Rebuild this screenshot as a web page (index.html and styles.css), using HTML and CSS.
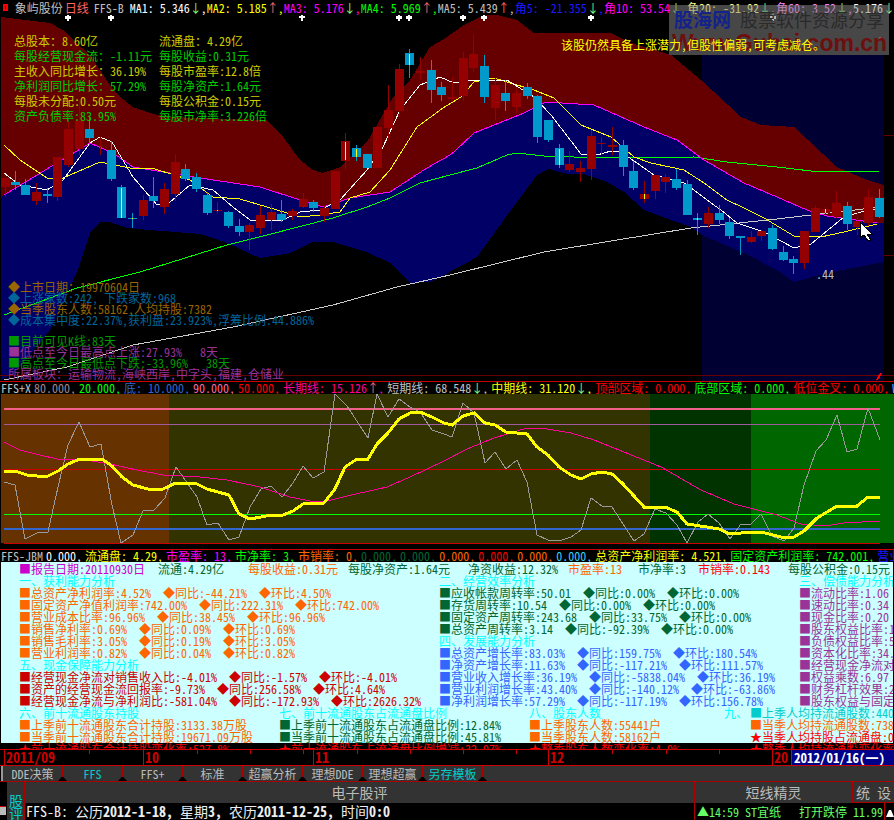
FILE: index.html
```html
<!DOCTYPE html>
<html lang="zh">
<head>
<meta charset="utf-8">
<title>象屿股份 日线</title>
<link rel="stylesheet" href="styles.css">
</head>
<body>
<div class="app">
  <div class="wm">
    <div class="wm-top"><span class="wm-logo">股海网</span><span class="wm-sub">股票软件资源分享</span></div>
    <div class="wm-url">Www.Guhai.com.cn</div>
  </div>

  <header class="head">
    <span class="h-sq"></span>
    <span class="h-name c-s">象屿股份</span>
    <span class="h-per c-sal">日线</span>
    <span class="h-idx c-s">FFS-B</span>
    <span class="c-w">MA1: 5.346<u class="dn">↓</u>,</span>
    <span class="c-y">MA2: 5.185<u class="up">↑</u>,</span>
    <span class="c-m">MA3: 5.176<u class="dn">↓</u>,</span>
    <span class="c-g">MA4: 5.969<u class="up">↑</u>,</span>
    <span class="c-s">MA5: 5.439<u class="up">↑</u>,</span>
    <span class="c-b">角5: -21.355<u class="dn">↓</u>,</span>
    <span class="c-m">角10: 53.54<u class="dn">↓</u>,</span>
    <span class="c-ly">角20: -31.92<u class="dn">↓</u>,</span>
    <span class="c-lm">角60: 3.52<u class="dn">↓</u>,</span>
    <span class="c-w">5.176<u class="dn">↓</u></span>
  </header>

  <section class="chart">
    <svg class="plot" width="894" height="366" viewBox="0 15 894 366">
      <rect x="702" y="55" width="182" height="326" fill="#000033"/>
      <polygon fill="#660000" points="1,17 50,23 63,30 73,40 90,55 100,70 110,85 120,97 133,107 150,113 167,117 267,120 283,137 300,160 313,170 323,173 340,167 367,142 393,97 410,80 430,47 444,39 464,25 484,15 497,15 517,20 534,33 611,33 631,43 671,55 701,80 741,117 761,125 794,127 837,167 867,180 884,185 884,223 877,223 827,216 807,210 777,197 744,183 704,160 677,140 644,127 594,105 546,102 524,113 474,133 454,152 450,155 427,168 390,192 350,198 323,207 300,200 260,187 200,178 133,167 113,153 90,143 4,195 1,197"/>
      <polygon fill="#000066" points="1,197 4,195 90,143 113,153 133,167 200,178 260,187 300,200 323,207 350,198 390,192 427,168 450,155 454,152 474,133 524,113 546,102 594,105 644,127 677,140 704,160 744,183 777,197 807,210 827,216 877,223 884,223 884,262 827,273 794,282 777,270 744,253 702,235 691,227 671,220 644,210 624,192 607,182 584,174 567,174 549,169 537,175 511,210 477,257 444,275 430,282 410,283 390,263 367,252 333,242 313,242 290,253 260,258 227,243 200,234 150,230 127,228 110,222 100,222 90,233 78,270 50,330 20,367 1,381"/>
      <path class="ln" stroke="#660000" d="M0 375.5H884M884 14.5H894M884 135.5H894M884 255.5H894M884 375.5H894"/>
      <polyline class="ln" stroke="#cccccc" points="4,380 67,367 133,345 233,327 333,305 397,287 450,275 544,252 611,241 691,228 777,219 811,215 881,207"/>
      <polyline class="ln" stroke="#00ff00" points="4,315 77,288 140,272 227,245 267,235 333,218 367,207 390,198 420,183 450,175 477,168 507,155 517,153 544,156 604,158 694,157 727,162 777,167 811,171 851,171 879,171"/>
      <polyline class="ln" stroke="#ff00ff" points="4,195 90,143 113,153 133,167 200,178 260,187 300,200 323,207 350,198 390,192 427,168 450,155 454,152 474,133 524,113 546,102 594,105 644,127 677,140 704,160 744,183 777,197 807,210 827,216 877,223"/>
      <polyline class="ln" stroke="#ffff00" points="4,145 20,160 47,178 63,178 100,162 130,168 155,169 190,180 213,197 240,199 277,210 300,217 320,215 340,212 350,198 370,192 390,170 417,127 443,108 461,97 474,82 494,78 507,82 534,90 554,98 581,125 611,137 634,157 651,163 684,170 704,183 727,200 744,208 764,218 794,236 821,237 844,232 877,224"/>
      <polyline class="ln" stroke="#ffffff" points="4,173 20,185 47,190 63,180 90,143 100,137 112,142 133,177 157,205 170,202 190,185 213,190 233,207 250,220 283,220 300,212 320,210 340,200 367,170 383,147 400,110 420,85 440,77 454,83 474,80 507,80 534,97 551,115 581,154 597,155 611,151 621,152 637,163 654,175 684,183 694,190 711,203 721,210 737,223 764,232 794,248 811,244 844,217 861,212 881,208"/>
      <path fill="#950000" d="M1 178h9v9h-9zM5 178h1v19h-1zM32 192h9v9h-9zM36 183h1v22h-1zM53 157h9v40h-9zM57 157h1v44h-1zM64 129h9v36h-9zM68 120h1v47h-1zM75 121h9v28h-9zM79 100h1v55h-1zM100 137h1v18h-1zM139 200h9v16h-9zM143 195h1v25h-1zM160 189h9v18h-9zM164 183h1v31h-1zM171 162h9v32h-9zM175 154h1v47h-1zM213 210h9v1h-9zM217 202h1v11h-1zM245 225h9v7h-9zM249 223h1v27h-1zM256 215h9v13h-9zM260 206h1v28h-1zM267 212h9v8h-9zM271 204h1v26h-1zM288 211h9v5h-9zM292 209h1v11h-1zM299 199h9v8h-9zM303 193h1v15h-1zM320 208h9v8h-9zM324 206h1v16h-1zM331 171h9v38h-9zM341 141h9v20h-9zM345 133h1v37h-1zM373 127h9v41h-9zM384 110h9v18h-9zM388 85h1v55h-1zM395 69h9v42h-9zM399 64h1v53h-1zM416 71h9v2h-9zM420 57h1v23h-1zM448 97h9v2h-9zM452 77h1v25h-1zM459 58h9v38h-9zM463 52h1v49h-1zM469 54h9v14h-9zM473 34h1v38h-1zM491 85h9v23h-9zM495 78h1v42h-1zM512 93h9v14h-9zM516 88h1v25h-1zM565 164h9v6h-9zM569 151h1v21h-1zM576 168h9v4h-9zM580 161h1v21h-1zM587 136h9v33h-9zM591 130h1v50h-1zM597 143h9v1h-9zM601 137h1v18h-1zM608 145h9v2h-9zM612 127h1v28h-1zM640 194h9v5h-9zM644 181h1v22h-1zM651 175h9v16h-9zM655 175h1v24h-1zM661 177h9v5h-9zM665 174h1v19h-1zM704 213h9v11h-9zM708 207h1v21h-1zM747 237h9v5h-9zM751 231h1v12h-1zM757 231h9v5h-9zM761 230h1v11h-1zM800 231h9v32h-9zM804 231h1v38h-1zM811 208h9v24h-9zM815 205h1v27h-1zM821 209h9v4h-9zM825 207h1v8h-1zM832 203h9v13h-9zM836 191h1v27h-1zM853 221h9v6h-9zM857 210h1v25h-1zM864 197h9v26h-9zM868 189h1v37h-1z"/>
      <path fill="#0099cc" d="M11 182h9v3h-9zM15 171h1v19h-1zM21 185h9v10h-9zM25 179h1v16h-1zM43 194h9v2h-9zM47 188h1v15h-1zM85 129h9v9h-9zM89 117h1v28h-1zM107 150h9v29h-9zM111 141h1v40h-1zM117 187h9v31h-9zM121 185h1v33h-1zM128 218h9v1h-9zM132 213h1v15h-1zM149 196h9v5h-9zM153 177h1v31h-1zM181 169h9v10h-9zM185 164h1v17h-1zM192 177h9v12h-9zM196 173h1v19h-1zM203 195h9v18h-9zM207 192h1v23h-1zM224 212h9v14h-9zM228 211h1v17h-1zM235 226h9v6h-9zM239 219h1v17h-1zM277 214h9v6h-9zM281 200h1v22h-1zM309 202h9v6h-9zM313 200h1v12h-1zM352 148h9v9h-9zM356 145h1v16h-1zM363 154h9v14h-9zM405 53h9v12h-9zM409 49h1v29h-1zM427 70h9v20h-9zM431 60h1v43h-1zM437 87h9v8h-9zM441 82h1v19h-1zM480 66h9v31h-9zM484 55h1v48h-1zM501 93h9v8h-9zM505 80h1v31h-1zM523 87h9v9h-9zM527 83h1v16h-1zM533 96h9v41h-9zM537 95h1v48h-1zM544 120h9v20h-9zM548 120h1v22h-1zM555 148h9v17h-9zM559 144h1v24h-1zM619 145h9v22h-9zM623 140h1v36h-1zM629 171h9v17h-9zM633 161h1v29h-1zM672 179h9v9h-9zM676 169h1v21h-1zM683 184h9v31h-9zM687 180h1v35h-1zM693 218h9v2h-9zM697 213h1v22h-1zM715 213h9v7h-9zM719 205h1v19h-1zM725 222h9v14h-9zM729 218h1v21h-1zM736 236h9v2h-9zM740 236h1v19h-1zM768 228h9v21h-9zM772 225h1v25h-1zM779 252h9v8h-9zM783 246h1v15h-1zM789 259h9v4h-9zM793 256h1v18h-1zM843 206h9v18h-9zM847 202h1v28h-1zM875 198h9v19h-9zM879 189h1v29h-1z"/>
      <path fill="#ffff00" d="M121 188h1v30h-1zM132 218h1v1h-1zM217 210h1v1h-1zM345 142h1v18h-1zM356 149h1v8h-1zM409 54h1v11h-1zM559 149h1v16h-1zM644 194h1v5h-1zM697 218h1v2h-1zM825 209h1v4h-1z"/>
      <path fill="#ffffff" d="M65 16h6v3h-6zM67 14h2v7h-2zM108 16h6v3h-6zM110 14h2v7h-2zM299 16h6v2h-6zM301 14h2v7h-2zM396 16h6v3h-6zM398 14h2v7h-2zM406 16h6v3h-6zM408 14h2v7h-2zM460 16h6v3h-6zM462 14h2v7h-2zM481 16h6v3h-6zM483 14h2v7h-2zM588 16h6v3h-6zM590 14h2v7h-2zM770 16h6v3h-6zM772 14h2v7h-2z"/>
      <path fill="#ffffff" stroke="#000000" d="M860 222v16l4-3 4 6 3-1-4-6h5z"/>
      <path class="thick" stroke="#ff0000" d="M877 380L881 373"/>
      <path fill="#ff0000" d="M879 37h2v2h-2z"/>
    </svg>

    <div class="info">
      <div class="c-gold">总股本：8.60亿</div><div class="c-gold">流通盘：4.29亿</div>
      <div class="c-gr">每股经营现金流：-1.11元</div><div class="c-gr">每股收益:0.31元</div>
      <div class="c-gold">主收入同比增长：36.19%</div><div class="c-gold">每股市盈率:12.8倍</div>
      <div class="c-gr">净利润同比增长：57.29%</div><div class="c-gr">每股净资产:1.64元</div>
      <div class="c-gold">每股未分配:0.50元</div><div class="c-gold">每股公积金:0.15元</div>
      <div class="c-gr">资产负债率:83.95%</div><div class="c-gr">每股市净率:3.226倍</div>
    </div>

    <div class="note">该股仍然具备上涨潜力，但股性偏弱，可考虑减仓。</div>
    <div class="num44">.44</div>

    <div class="facts">
      <div class="c-bro">◆上市日期：19970604日</div>
      <div class="c-teal">◆上涨家数:242, 下跌家数:968</div>
      <div class="c-bro">◆当季股东人数:58162,人均持股:7382</div>
      <div class="c-teal">◆成本集中度:22.37%,获利盘:23.923%,浮筹比例:44.886%</div>
      <div class="c-gr2 gap">■目前可见K线:83天</div>
      <div class="c-pur">■低点至今日最高点上涨:27.93%   8天</div>
      <div class="c-gr2">■高点至今日最低点下跌:-33.96%   38天</div>
      <div class="c-pur">所属板块：运输物流,海峡西岸,中字头,福建,仓储业</div>
    </div>
  </section>

  <div class="bar">
    <span class="c-s">FFS+X</span>
    <span class="c-gp">80.000,</span>
    <span class="c-g">20.000,</span>
    <span class="c-bl">底: 10.000,</span>
    <span class="c-pk">90.000,</span>
    <span class="c-r">50.000,</span>
    <span class="c-hp">长期线: 15.126<u class="up">↑</u>,</span>
    <span class="c-s">短期线: 68.548<u class="dn">↓</u>,</span>
    <span class="c-y">中期线: 31.120<u class="dn">↓</u>,</span>
    <span class="c-r">顶部区域: 0.000,</span>
    <span class="c-g">底部区域: 0.000,</span>
    <span class="c-r">低位金叉: 0.000,</span>
    <span class="c-c">W,</span>
  </div>

  <svg class="sub" width="894" height="155" viewBox="0 394 894 155">
    <rect x="1" y="394" width="168" height="149" fill="#663300"/>
    <rect x="169" y="394" width="481" height="149" fill="#333300"/>
    <rect x="650" y="394" width="101" height="149" fill="#003300"/>
    <rect x="751" y="394" width="143" height="149" fill="#006600"/>
    <path class="ln" stroke="#a05aa0" d="M4 424.5H880"/>
    <path class="ln" stroke="#cc0000" d="M4 469.5H880M4 543.5H880"/>
    <path class="ln" stroke="#00ff00" d="M4 514.5H880"/>
    <path class="thick" stroke="#f06088" d="M4 409H880"/>
    <path class="thick" stroke="#3366cc" d="M4 529H880"/>
    <polyline class="ln" stroke="#999999" points="4,482 15,485 25,539 37,533 48,532 58,487 68,445 79,422 90,447 101,444 112,505 121,543 133,535 143,511 154,510 165,498 176,467 197,497 207,525 218,523 229,540 239,537 250,507 261,489 271,486 282,497 293,483 303,466 313,478 324,472 335,394 347,406 368,438 377,394 388,417 399,399 410,407 420,412 432,430 444,434 452,437 463,403 474,413 485,463 495,452 506,469 517,460 527,482 537,535 548,540 559,541 571,537 581,530 591,498 602,506 612,507 634,541 644,534 655,509 666,513 677,525 687,543 698,522 708,514 719,523 730,539 741,524 751,524 761,514 772,536 784,541 794,528 804,485 816,451 826,440 837,415 847,452 857,449 868,408 880,440"/>
    <polyline class="ln" stroke="#ff0099" points="4,442 20,450 40,455 57,459 80,459 110,464 137,470 163,475 200,477 227,480 260,487 290,497 310,501 327,501 347,496 387,487 410,477 444,461 467,449 494,438 527,428 541,428 571,433 594,440 624,452 661,467 701,490 734,504 777,515 801,524 824,526 844,523 880,521"/>
    <polyline class="thick3" stroke="#ffff00" points="4,471 15,471 27,475 37,476 48,476 58,471 68,464 80,459 102,459 112,466 122,477 133,485 148,489 163,489 176,483 197,484 207,489 229,495 239,514 250,519 261,517 271,515 283,515 293,511 303,504 324,503 335,489 345,467 357,459 368,459 377,444 388,433 399,419 410,413 420,412 432,417 444,423 452,425 463,416 474,413 485,423 495,425 506,432 527,434 537,447 548,455 559,467 571,475 581,479 591,474 602,472 612,474 622,483 634,496 644,507 665,507 677,512 687,524 707,527 719,529 730,534 741,533 761,532 781,537 794,537 804,531 817,518 837,506 857,506 868,497 880,497"/>
  </svg>

  <div class="bar">
    <span class="c-s">FFS-JBM</span>
    <span class="c-w">0.000,</span>
    <span class="c-y">流通盘: 4.29,</span>
    <span class="c-m">市盈率: 13,</span>
    <span class="c-g">市净率: 3,</span>
    <span class="c-o">市销率: 0,</span>
    <span class="c-dg">0.000,</span>
    <span class="c-dg">0.000,</span>
    <span class="c-o">0.000,</span>
    <span class="c-r">0.000,</span>
    <span class="c-o">0.000,</span>
    <span class="c-c">0.000,</span>
    <span class="c-y">总资产净利润率: 4.521,</span>
    <span class="c-g">固定资产利润率: 742.001,</span>
    <span class="c-b">营业</span>
  </div>

  <section class="f10">
    <div class="f-top">
      <div class="t-pur2">■报告日期:20110930日</div>
      <div class="t-dg">流通:4.29亿</div>
      <div class="t-o">每股收益:0.31元</div>
      <div class="t-dg">每股净资产:1.64元</div>
      <div class="t-dg">净资收益:12.32%</div>
      <div class="t-o">市盈率:13</div>
      <div class="t-dg">市净率:3</div>
      <div class="t-r">市销率:0.143</div>
      <div class="t-dg">每股公积金:0.15元</div>
    </div>
    <div class="f-cols">
      <div>
        <h3>一、获利能力分析</h3>
        <div class="t-o">■总资产净利润率:4.52%  ◆同比:-44.21%  ◆环比:4.50%</div>
        <div class="t-o">■固定资产净值利润率:742.00%  ◆同比:222.31%  ◆环比:742.00%</div>
        <div class="t-o">■营业成本比率:96.96%  ◆同比:38.45%  ◆环比:96.96%</div>
        <div class="t-o">■销售净利率:0.69%  ◆同比:0.09%  ◆环比:0.69%</div>
        <div class="t-o">■销售毛利率:3.05%  ◆同比:0.19%  ◆环比:3.05%</div>
        <div class="t-o">■营业利润率:0.82%  ◆同比:0.04%  ◆环比:0.82%</div>
        <h3>五、现金保障能力分析</h3>
        <div class="t-dr">■经营现金净流对销售收入比:-4.01%  ◆同比:-1.57%  ◆环比:-4.01%</div>
        <div class="t-dr">■资产的经营现金流回报率:-9.73%  ◆同比:256.58%  ◆环比:4.64%</div>
        <div class="t-dr">■经营现金净流与净利润比:-581.04%  ◆同比:-172.93%  ◆环比:2626.32%</div>
      </div>
      <div>
        <h3>二、经营效率分析</h3>
        <div class="t-dg">■应收帐款周转率:50.01  ◆同比:0.00%  ◆环比:0.00%</div>
        <div class="t-dg">■存货周转率:10.54  ◆同比:0.00%  ◆环比:0.00%</div>
        <div class="t-dg">■固定资产周转率:243.68  ◆同比:33.75%  ◆环比:0.00%</div>
        <div class="t-dg">■总资产周转率:3.14  ◆同比:-92.39%  ◆环比:0.00%</div>
        <h3>四、发展能力分析</h3>
        <div class="t-bl">■总资产增长率:83.03%  ◆同比:159.75%  ◆环比:180.54%</div>
        <div class="t-bl">■净资产增长率:11.63%  ◆同比:-117.21%  ◆环比:111.57%</div>
        <div class="t-bl">■营业收入增长率:36.19%  ◆同比:-5838.04%  ◆环比:36.19%</div>
        <div class="t-bl">■营业利润增长率:43.40%  ◆同比:-140.12%  ◆环比:-63.86%</div>
        <div class="t-bl">■净利润增长率:57.29%  ◆同比:-117.19%  ◆环比:156.78%</div>
      </div>
      <div>
        <h3>三、偿债能力分析</h3>
        <div class="t-pu">■流动比率:1.06</div>
        <div class="t-pu">■速动比率:0.34</div>
        <div class="t-pu">■现金比率:0.20</div>
        <div class="t-pu">■股东权益比率:11.42%</div>
        <div class="t-pu">■负债权益比率:5.19</div>
        <div class="t-pu">■资本化比率:34.62%</div>
        <div class="t-pu">■经营现金净流对负债比</div>
        <div class="t-pu">■权益乘数:6.97</div>
        <div class="t-pu">■财务杠杆效果:2.12</div>
        <div class="t-pu">■股东权益与固定资产比</div>
      </div>
    </div>
    <div class="f-low">
      <div>
        <h3>六、前十流通股东持股</h3>
        <div class="t-o">■上季前十流通股东合计持股:3133.38万股</div>
        <div class="t-o">■当季前十流通股东合计持股:19671.09万股</div>
        <div class="t-r">★前十流通股东合计持股变化率:527.8%</div>
      </div>
      <div>
        <h3>七、前十流通股东占流通盘比例</h3>
        <div class="t-dg">■上季前十流通股东占流通盘比例:12.84%</div>
        <div class="t-dg">■当季前十流通股东占流通盘比例:45.81%</div>
        <div class="t-r">★前十流通股东占流通盘比例增减:32.97%</div>
      </div>
      <div>
        <h3>八、股东人数</h3>
        <div class="t-o">■上季股东人数:55441户</div>
        <div class="t-o">■当季股东人数:58162户</div>
        <div class="t-r">★整季股东人数变化率:4.9%</div>
      </div>
      <div class="f-nine">
        <div class="row9"><span class="h9">九、</span><span class="t-te">■上季人均持流通股数:440</span></div>
        <div class="t-o pad9">■当季人均持流通股数:738</div>
        <div class="t-r pad9">★当季人均持股占流通盘:0.01</div>
        <div class="t-r pad9">★整季人均持流通股变化率</div>
      </div>
    </div>
  </section>

  <div class="axis">
    <div class="ax-pad"></div>
    <div class="ax-y">2011/09</div>
    <div class="ax-a">10</div>
    <div class="ax-b">11</div>
    <div class="ax-c">12</div>
    <div class="ax-d">20</div>
    <div class="ax-date">2012/01/16(一)</div>
    <svg class="ticks" width="894" height="5"><path class="ln" stroke="#cc0000" d="M89.5 0v4M197.5 0v4M250.5 0v4M303.5 0v4M357.5 0v4M410.5 0v4M463.5 0v4M516.5 0v4M612.5 0v4M666.5 0v4M719.5 0v4"/></svg>
  </div>

  <nav class="tabs">
    <span class="grip"></span>
    <span class="tab">DDE决策</span>
    <span class="tab on">FFS</span>
    <span class="tab">FFS+</span>
    <span class="tab">标准</span>
    <span class="tab">超赢分析</span>
    <span class="tab">理想DDE</span>
    <span class="tab">理想超赢</span>
    <span class="tab on">另存模板</span>
  </nav>

  <footer class="foot">
    <div class="side"><span class="side-ic"></span></div>
    <div class="vtab">股<br>评</div>
    <div class="rows">
      <div class="top">
        <div class="t-mid">电子股评</div>
        <div class="t-right">短线精灵</div>
        <div class="t-cell">统</div>
        <div class="t-cell">设</div>
      </div>
      <div class="stat">
        <div class="s-main">FFS-B: 公历<b>2012-1-18,</b> 星期<b>3,</b> 农历<b>2011-12-25,</b> 时间<b>0:0</b></div>
        <div class="s-news"><span class="s-t">▲14:59 ST宜纸</span><span class="s-e">打开跌停</span><span>11.99</span></div>
        <div class="s-ic"><svg width="8" height="9"><path fill="#ffffff" d="M0 9L3 2h2l3 7z"/></svg></div>
      </div>
    </div>
  </footer>
</div>
</body>
</html>
```
FILE: styles.css
```css
* { box-sizing: border-box; }
html, body { margin: 0; padding: 0; background: #000; }
body {
  font: 12px/12px "Noto Sans CJK SC", sans-serif;
  font-feature-settings: "hwid";
  color: #ccc;
}
.app { position: relative; width: 894px; height: 820px; overflow: hidden; background: #000; }
u { text-decoration: none; display: inline-block; width: 11px; }
.up { color: #ff6666; }
.dn { color: #80ff80; }

.c-s { color: #c0c0c0; } .c-w { color: #fff; } .c-y { color: #ffff00; } .c-m { color: #ff00ff; }
.c-g { color: #00ff00; } .c-b { color: #1a1aff; } .c-ly { color: #ffff80; } .c-lm { color: #ff80ff; }
.c-sal { color: #ff6666; } .c-gold { color: #cccc00; } .c-gr { color: #00cc00; } .c-gr2 { color: #009900; }
.c-bro { color: #996600; } .c-teal { color: #006699; } .c-pur { color: #993399; } .c-gp { color: #998899; }
.c-bl { color: #3366cc; } .c-pk { color: #ff6699; } .c-r { color: #ff0000; } .c-hp { color: #ff0099; }
.c-c { color: #33ccff; } .c-o { color: #ff6600; } .c-dg { color: #006633; }

.head { display: flex; height: 15px; align-items: center; white-space: pre; overflow: hidden; }
.h-sq { width: 7px; height: 7px; margin: 0 7px 0 3px; border: 2px solid #ff0000; }
.h-name { margin-right: 2px; }
.h-per { margin-right: 5px; }
.h-idx { margin-right: 6px; }

.chart { position: relative; height: 366px; }
.plot, .sub { display: block; shape-rendering: crispEdges; }
.ln { fill: none; stroke-width: 1; }
.thick { fill: none; stroke-width: 2; }
.thick3 { fill: none; stroke-width: 3; }

.info {
  position: absolute; left: 14px; top: 18px;
  display: grid; grid-template-columns: 145px 1fr; grid-auto-rows: 15px;
  line-height: 15px;
}
.info > div { white-space: pre; }
.note { position: absolute; z-index: 3; left: 561px; top: 24px; color: #ffff00; line-height: 12px; }
.num44 { position: absolute; left: 816px; top: 253px; color: #bbb; }
.facts { position: absolute; left: 8px; top: 266px; line-height: 11px; }
.facts > div { white-space: pre; }
.gap { margin-top: 10px; }

.bar { display: flex; gap: 3px; height: 13px; padding-left: 1px; border-top: 1px solid #cc0000; white-space: pre; overflow: hidden; }

.f10 {
  height: 187px; overflow: hidden;
  border-left: 1px solid #000; border-right: 1px solid #000;
  background: linear-gradient(#ccffff 181px, #000 181px);
  padding: 1px 0 0 18px;
}
.f10 h3 { margin: 0; font-weight: normal; font-size: 12px; color: #00ffff; white-space: pre; }
.f-top { display: grid; grid-template-columns: 139px 90px 100px 120px 100px 70px 60px 90px 1fr; }
.f-cols { display: grid; grid-template-columns: 420px 360px 1fr; overflow: hidden; }
.f-low { display: grid; grid-template-columns: 260px 250px 195px 1fr; overflow: hidden; }
.t-pur2, .t-dg, .t-o, .t-r, .t-dr, .t-bl, .t-pu, .row9 { white-space: pre; }
.t-pur2 { color: #cc00cc; } .t-dg { color: #006633; } .t-o { color: #ff6600; } .t-r { color: #ff0000; }
.t-dr { color: #cc0000; } .t-bl { color: #3366ff; } .t-pu { color: #993399; } .t-te { color: #00cccc; }
.h9 { color: #00ffff; display: inline-block; width: 26px; }
.pad9 { padding-left: 26px; }

.axis {
  position: relative; display: grid; height: 17px;
  grid-template-columns: 4px 139px 170px 235px 224px 19px 1fr;
  border-top: 1px solid #cc0000; border-bottom: 1px solid #cc0000;
  font-size: 14px; line-height: 15px; font-weight: bold; color: #cc0000;
}
.axis > div { border-left: 1px solid #cc0000; padding-left: 1px; }
.axis .ax-pad { border: 0; padding: 0; }
.axis .ax-date { background: #000088; color: #fff; padding-left: 2px; white-space: pre; overflow: hidden; font-size: 13px; }
.ticks { position: absolute; left: 0; top: 0; }

.tabs { display: flex; height: 16px; background: #333; border-bottom: 1px solid #aa0000; color: #bbb; line-height: 15px; }
.grip { width: 3px; background: #000; border-left: 1px solid #000; border-right: 2px solid #999; }
.tab { position: relative; width: 60px; text-align: center; border-right: 1px solid #aa0000; }
.tab.on { color: #00cccc; }
.tab::after {
  content: ""; position: absolute; right: -5px; bottom: 0; width: 9px; height: 4px;
  background: #000; border-top: 1px solid #cc0000;
  clip-path: polygon(50% 0, 100% 100%, 0 100%);
}

.foot { display: grid; grid-template-columns: 7px 18px 1fr; height: 38px; }
.side { display: flex; align-items: flex-end; }
.side-ic { width: 6px; height: 9px; margin-bottom: 6px; background: #bbb; border-top: 1px solid #cc0000; }
.vtab {
  background: #333; color: #00cccc; border: 1px solid #aa0000; border-top: 0;
  text-align: center; padding-top: 12px; font-size: 14px; line-height: 13px;
}
.rows { display: grid; grid-template-rows: 21px 17px; }
.top { display: flex; background: #333; color: #bbb; font-size: 14px; line-height: 21px; text-align: center; }
.t-mid { width: 669px; }
.t-right { width: 158px; border-left: 1px solid #aa0000; }
.t-cell { width: 21px; border-left: 1px solid #aa0000; border-bottom: 1px solid #aa0000; }
.stat { display: flex; line-height: 17px; }
.s-main { width: 669px; font-size: 14px; color: #eee; white-space: pre; padding-left: 1px; }
.s-main b { font-weight: bold; }
.s-news { display: flex; width: 190px; padding-left: 2px; color: #66ff66; border-left: 1px solid #aa0000; white-space: pre; }
.s-t { width: 102px; }
.s-e { width: 54px; }
.s-ic { width: 10px; border-left: 1px solid #aa0000; padding-left: 1px; }

.wm {
  position: absolute; z-index: 2; left: 669px; top: 5px; width: 220px; height: 50px;
  background: rgba(130,130,130,.55); overflow: hidden; padding: 2px 0 0 5px;
}
.wm-top { display: flex; align-items: center; height: 24px; }
.wm-logo { font-size: 19px; line-height: 22px; font-weight: bold; color: #14228c; }
.wm-sub { margin-left: 9px; font-size: 18px; line-height: 22px; color: #2a2a2a; }
.wm-url { margin-left: -2px; font: bold 23px/24px "Liberation Sans", sans-serif; color: #6e0f0f; white-space: nowrap; }
```
